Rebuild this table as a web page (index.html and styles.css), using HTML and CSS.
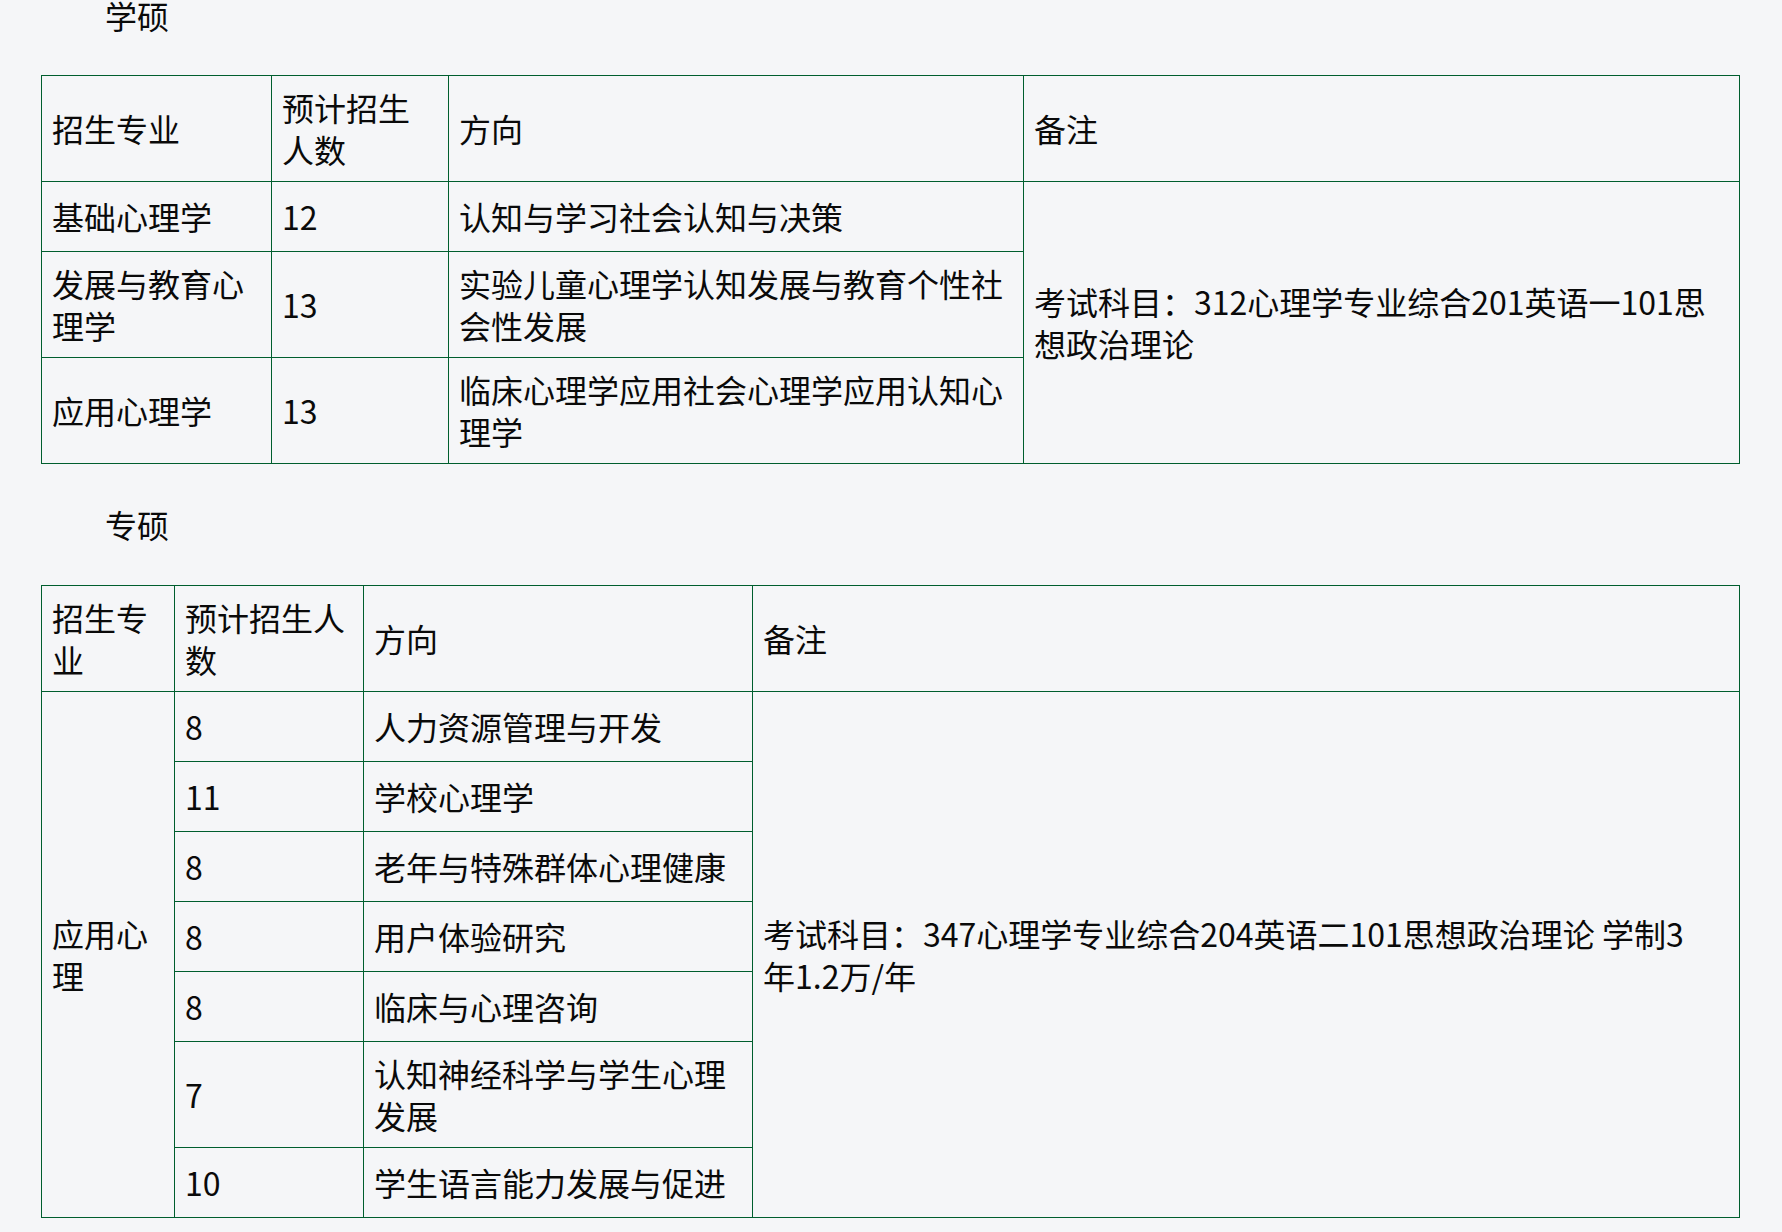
FILE: index.html
```html
<!DOCTYPE html>
<html lang="zh-CN">
<head>
<meta charset="utf-8">
<title>招生专业</title>
<link rel="stylesheet" href="styles.css">
</head>
<body>
<div class="page">
  <p class="section-title first">学硕</p>
  <table class="plan">
    <colgroup>
      <col class="t1c1"><col class="t1c2"><col class="t1c3"><col class="t1c4">
    </colgroup>
    <tr class="head">
      <td>招生专业</td>
      <td>预计招生人数</td>
      <td>方向</td>
      <td>备注</td>
    </tr>
    <tr>
      <td>基础心理学</td>
      <td>12</td>
      <td>认知与学习社会认知与决策</td>
      <td rowspan="3">考试科目：312心理学专业综合201英语一101思想政治理论</td>
    </tr>
    <tr>
      <td>发展与教育心理学</td>
      <td>13</td>
      <td>实验儿童心理学认知发展与教育个性社会性发展</td>
    </tr>
    <tr>
      <td>应用心理学</td>
      <td>13</td>
      <td>临床心理学应用社会心理学应用认知心理学</td>
    </tr>
  </table>

  <p class="section-title">专硕</p>
  <table class="plan second">
    <colgroup>
      <col class="t2c1"><col class="t2c2"><col class="t2c3"><col class="t2c4">
    </colgroup>
    <tr class="head">
      <td>招生专业</td>
      <td>预计招生人数</td>
      <td>方向</td>
      <td>备注</td>
    </tr>
    <tr>
      <td rowspan="7">应用心理</td>
      <td>8</td>
      <td>人力资源管理与开发</td>
      <td rowspan="7">考试科目：347心理学专业综合204英语二101思想政治理论 学制3<br>年1.2万/年</td>
    </tr>
    <tr><td>11</td><td>学校心理学</td></tr>
    <tr><td>8</td><td>老年与特殊群体心理健康</td></tr>
    <tr><td>8</td><td>用户体验研究</td></tr>
    <tr><td>8</td><td>临床与心理咨询</td></tr>
    <tr><td>7</td><td>认知神经科学与学生心理发展</td></tr>
    <tr><td>10</td><td>学生语言能力发展与促进</td></tr>
  </table>
</div>
</body>
</html>
```
FILE: styles.css
```css
html, body {
  margin: 0;
  padding: 0;
  background: #f5f6f8;
}

body {
  font-family: "Noto Sans CJK SC", "Noto Sans", sans-serif;
  font-size: 32px;
  line-height: 42px;
  color: #0a0a0a;
}

.page {
  padding: 0 43px 0 41px;
}

.section-title {
  margin: 0;
  text-indent: 64px;
  line-height: 40px;
}

.section-title.first {
  margin-top: -5px;
}

.plan {
  width: 1698px;
  table-layout: fixed;
  border-collapse: collapse;
  margin: 40px 0 40px;
}

.plan.second {
  margin-top: 41px;
}

.plan td {
  border: 1px solid #005e2e;
  padding: 10px 10px 11px;
  vertical-align: middle;
  text-align: left;
  line-height: 42px;
}

.plan tr {
  height: 70px;
}

.t1c1 { width: 230px; }
.t1c2 { width: 177px; }
.t1c3 { width: 575px; }
.t1c4 { width: 716px; }

.t2c1 { width: 133px; }
.t2c2 { width: 189px; }
.t2c3 { width: 389px; }
.t2c4 { width: 987px; }
```
